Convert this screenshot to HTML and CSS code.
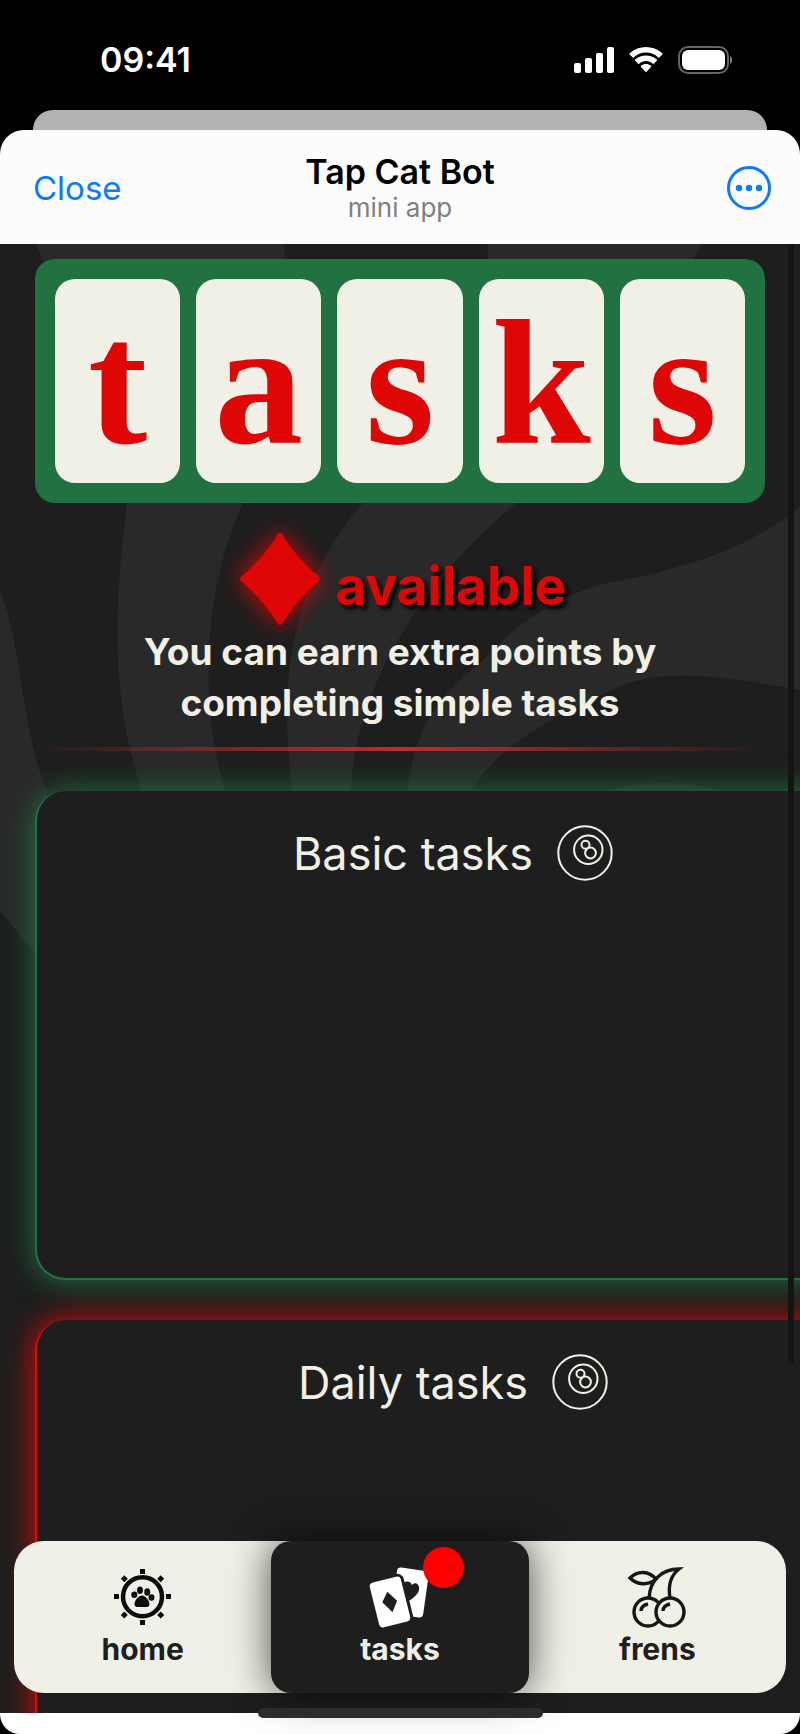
FILE: index.html
```html
<!DOCTYPE html>
<html lang="en">

<head>
    <meta charset="UTF-8">
    <meta name="viewport" content="width=device-width, initial-scale=1.0">
    <title>Tap Cat Bot</title>
    <link rel="stylesheet" href="styles.css">
</head>

<body>
    <div class="phone">
        <div class="status-bar">
            <span class="time">09:41</span>
            <div class="status-icons">
                <svg width="40" height="26" viewBox="0 0 40 26" fill="#fff">
                    <rect x="0" y="16" width="7" height="10" rx="2" />
                    <rect x="11" y="11" width="7" height="15" rx="2" />
                    <rect x="22" y="6" width="7" height="20" rx="2" />
                    <rect x="33" y="0" width="7" height="26" rx="2" />
                </svg>
                <svg width="34" height="26" viewBox="0 0 34 26" fill="#fff">
                    <path d="M17 5.500c4.600 0 9 1.700 12.300 4.900.3.300.7.300 1 0l3-3c.3-.3.3-.8 0-1.100C24-2 10-2 .7 6.300c-.3.300-.3.800 0 1.100l3 3c.3.300.7.300 1 0C8 7.200 12.400 5.500 17 5.500z" />
                    <path d="M17 14c2.500 0 5 1 6.800 2.700.3.300.8.300 1 0l3-3c.3-.300.3-.8 0-1.100-6-5.600-15.600-5.600-21.600 0-.3.300-.3.800 0 1.100l3 3c.3.300.700.300 1 0C12 15 14.500 14 17 14z" />
                    <path d="M22 19.900c.3-.3.3-.8 0-1.100-2.900-2.300-7.100-2.300-10 0-.3.300-.3.800 0 1.100l4.400 4.900c.3.400.9.400 1.200 0z" />
                </svg>
                <svg width="56" height="28" viewBox="0 0 56 28">
                    <rect x="1" y="1" width="49" height="26" rx="9" fill="none" stroke="#666" stroke-width="2" />
                    <rect x="4" y="4" width="43" height="20" rx="6" fill="#fff" />
                    <path d="M52 10c3 1 3 7 0 8z" fill="#777" />
                </svg>
            </div>
        </div>
        <div class="back-sheet"></div>

        <div class="sheet">
            <header class="header">
                <button class="close">Close</button>
                <div class="header-title">
                    <h1>Tap Cat Bot</h1>
                    <p>mini app</p>
                </div>
                <button class="more" aria-label="More">
                    <svg width="44" height="44" viewBox="0 0 44 44">
                        <circle cx="22" cy="22" r="20.500" fill="none" stroke="#0a7aff" stroke-width="3" />
                        <g fill="#0a7aff">
                            <circle cx="12" cy="22" r="3.200" />
                            <circle cx="22" cy="22" r="3.200" />
                            <circle cx="32" cy="22" r="3.200" />
                        </g>
                    </svg>
                </button>
            </header>

            <main class="content">
                <svg class="stripes" viewBox="0 0 800 760" preserveAspectRatio="xMidYMin slice" fill="#292929">
                    <path d="M36 0H284C290 60 270 200 243 259C205 340 197 460 226 548H142C113 460 112 380 127 259C110 150 60 60 36 0z" />
                    <path d="M488 0H702L690 20L517 259C440 320 355 430 351 548H292C280 440 285 350 363 259C440 160 488 80 488 0z" />
                    <path d="M407 548C415 470 455 440 483 416C510 388 545 356 600 341C680 325 740 310 800 263V446C740 435 660 420 612 446C550 475 500 500 470 548z" />
                    <path d="M602 548Q663 530 724 548z" />
                    <path d="M0 347C22 400 20 480 47 548V707H33L0 667z" />
                </svg>

                <div class="board">
                    <span>t</span>
                    <span>a</span>
                    <span>s</span>
                    <span>k</span>
                    <span>s</span>
                </div>

                <section class="intro">
                    <div class="available">
                        <svg class="diamond" width="80" height="94" viewBox="0 0 80 94">
                            <path d="M38 2Q40 0 42 2Q56 26 79 45Q81 47 79 49Q56 68 42 92Q40 94 38 92Q24 68 1 49Q-1 47 1 45Q24 26 38 2z" fill="#df0606" />
                        </svg>
                        <h2>available</h2>
                    </div>
                    <p>You can earn extra points by<br>completing simple tasks</p>
                    <hr>
                </section>

                <section class="panel basic">
                    <h3>Basic tasks</h3>
                    <svg class="ball" width="56" height="56" viewBox="0 0 56 56">
                        <circle cx="28" cy="28" r="26.700" />
                        <circle cx="31.300" cy="24.700" r="14.200" />
                        <circle cx="28.500" cy="19.700" r="4" />
                        <circle cx="33.500" cy="28" r="5.400" />
                    </svg>
                </section>

                <section class="panel daily">
                    <h3>Daily tasks</h3>
                    <svg class="ball" width="56" height="56" viewBox="0 0 56 56">
                        <circle cx="28" cy="28" r="26.700" />
                        <circle cx="31.300" cy="24.700" r="14.200" />
                        <circle cx="28.500" cy="19.700" r="4" />
                        <circle cx="33.500" cy="28" r="5.400" />
                    </svg>
                </section>

                <div class="scrollbar"></div>
            </main>

            <nav class="nav">
                <a href="#home">
                    <svg width="60" height="64" viewBox="0 0 60 64" fill="#0c0c0c">
                        <circle cx="29.500" cy="31.700" r="19.500" fill="none" stroke="#0c0c0c" stroke-width="4.500" />
                        <rect x="27" y="4" width="5" height="5" />
                        <rect x="27" y="55" width="5" height="5" />
                        <rect x="1" y="29" width="5" height="5" />
                        <rect x="53" y="29" width="5" height="5" />
                        <path d="M11.300 10.200l3.500 3.500-3.500 3.500-3.500-3.500zM47.700 10.200l3.500 3.500-3.500 3.500-3.500-3.500zM11.300 46.500l3.500 3.500-3.500 3.500-3.500-3.500zM47.700 46.500l3.500 3.500-3.500 3.500-3.500-3.500z" />
                        <ellipse cx="21.300" cy="29.700" rx="3" ry="3.300" />
                        <ellipse cx="27" cy="25.300" rx="3" ry="3.800" />
                        <ellipse cx="34.200" cy="27" rx="3" ry="3.800" />
                        <ellipse cx="38.500" cy="32.500" rx="3" ry="3.300" />
                        <path d="M29 30.500c4 0 7.500 6 7.500 8.500 0 4-4 3-7.500 3s-7.500 1-7.500-3c0-3 3.500-8.500 7.500-8.500z" />
                    </svg>
                    home
                </a>
                <a href="#tasks" class="active">
                    <svg width="60" height="64" viewBox="0 0 60 64">
                        <rect x="24" y="4" width="32" height="47" rx="4" transform="rotate(8 40 28)" fill="#fff" />
                        <path d="M34 18c3-3 7-1 8 2 4-4 8 0 7 5-1 4-5 8-12 12z" fill="#1e1e1e" />
                        <rect x="4" y="14" width="32" height="46" rx="4" transform="rotate(-14 20 37)" fill="#fff" stroke="#1e1e1e" stroke-width="6" paint-order="stroke" />
                        <path d="M17.300 26.700l9.800 9-4.600 11.600-10.200-10z" fill="#1e1e1e" />
                    </svg>
                    tasks
                    <span class="dot"></span>
                </a>
                <a href="#frens">
                    <svg width="60" height="64" viewBox="0 0 60 64" fill="none" stroke="#161616" stroke-width="3.400">
                        <circle cx="21" cy="47" r="14" />
                        <circle cx="43" cy="47" r="14" fill="#f0f0e6" />
                        <path d="M22 33C23 16 34 4 52 4C43 11 41 21 43 33M3 13C11 5 22 6 29 14C21 21 10 20 3 13zM14 46c0-4 3-6 7-7M36 46c0-4 3-6 7-7" />
                    </svg>
                    frens
                </a>
            </nav>
        </div>

        <div class="home-bar"><span></span></div>
    </div>
</body>

</html>
```

FILE: styles.css
```css
* {
    margin: 0;
    padding: 0;
    box-sizing: border-box;
}

body {
    background-color: #000;
    font-family: Inter, "Liberation Sans", sans-serif;
}

.phone {
    height: 100vh;
    display: flex;
    flex-direction: column;
    background-color: #000;
}

.status-bar {
    height: 110px;
    padding: 9px 66px 0 100px;
    display: flex;
    align-items: center;
    justify-content: space-between;
    flex-shrink: 0;
}

.time {
    color: #fff;
    font-size: 34px;
    font-weight: 600;
}

.status-icons {
    display: flex;
    align-items: center;
    gap: 15px;
}

.back-sheet {
    height: 20px;
    margin: 0 33px;
    background-color: #b3b2b0;
    border-radius: 20px 20px 0 0;
    flex-shrink: 0;
}

.sheet {
    flex: 1;
    min-height: 0;
    position: relative;
    display: flex;
    flex-direction: column;
}

.header {
    height: 114px;
    padding: 2px 29px 0;
    display: grid;
    grid-template-columns: 1fr auto 1fr;
    align-items: center;
    flex-shrink: 0;
    background-color: #fcfcfc;
    border-radius: 24px 24px 0 0;
}

.header button {
    border: none;
    background: none;
    color: #0a7aff;
}

.header .close {
    justify-self: start;
    padding-left: 4px;
    font-family: inherit;
    font-size: 33px;
}

.more {
    justify-self: end;
    height: 44px;
}

.header-title {
    text-align: center;
}

.header-title h1 {
    font-size: 34px;
    line-height: 40px;
    font-weight: 600;
}

.header-title p {
    color: #808080;
    font-size: 26px;
    line-height: 32px;
}

.content {
    flex: 1;
    min-height: 0;
    position: relative;
    overflow: hidden;
    padding: 15px 35px 0;
    background-color: #1e1e1e;
}

.stripes {
    position: absolute;
    top: 0;
    left: 0;
    width: 100%;
}

/* title made of playing cards */
.board {
    position: relative;
    height: 244px;
    padding: 20px;
    display: grid;
    grid-template-columns: repeat(5, 1fr);
    gap: 16px;
    background-color: #227141;
    border-radius: 20px;
}

.board span {
    padding-top: 4px;
    background-color: #f0f0e6;
    border-radius: 20px;
    color: #df0606;
    font-family: "Liberation Serif", serif;
    font-size: 178px;
    font-weight: bold;
    line-height: 200px;
    text-align: center;
}

.intro {
    position: relative;
    text-align: center;
    color: #f0f0e6;
}

.available {
    padding: 29px 0 0 6px;
    display: flex;
    justify-content: center;
    gap: 16px;
}

.diamond {
    overflow: visible;
    filter: drop-shadow(0 0 12px #df0606);
}

.available h2 {
    padding-top: 21px;
    color: #df0606;
    font-size: 53px;
    line-height: 66px;
    text-shadow: 4px 4px 4px #000;
}

.intro p {
    font-size: 37px;
    font-weight: 700;
    line-height: 51px;
}

.intro hr {
    height: 4px;
    margin-top: 19px;
    border: none;
    background: linear-gradient(to right, transparent, #c62a2c, transparent);
}

.panel {
    position: relative;
    width: 836px;
    height: 489px;
    display: flex;
    justify-content: center;
    gap: 24px;
    margin-top: 40px;
    padding-top: 34px;
    background-color: #1e1e1e;
    border-radius: 30px;
}

.panel h3 {
    color: #f0f0e6;
    font-size: 45px;
    font-weight: 400;
    line-height: 58px;
}

.basic {
    border: 2px solid #227141;
    border-top: none;
    box-shadow: 0 0 30px #227141;
}

.daily {
    border: 2px solid #df0606;
    border-top: none;
    box-shadow: 0 0 30px #df0606;
}

.ball {
    fill: none;
    stroke: #f0f0e6;
    stroke-width: 2px;
}

.scrollbar {
    position: absolute;
    top: 0;
    right: 6px;
    width: 6px;
    height: 1120px;
    background-color: #141414;
    border-radius: 3px;
}

.nav {
    position: absolute;
    left: 14px;
    right: 14px;
    bottom: 20px;
    height: 152px;
    display: grid;
    grid-template-columns: repeat(3, 1fr);
    background-color: #f0f0e6;
    border-radius: 30px;
}

.nav a {
    position: relative;
    padding-top: 24px;
    display: flex;
    flex-direction: column;
    align-items: center;
    color: #1e1e1e;
    font-size: 30px;
    font-weight: 700;
    line-height: 40px;
    text-decoration: none;
}

.nav svg {
    overflow: visible;
}

.nav .active {
    background-color: #1e1e1e;
    color: #f0f0e6;
    border-radius: 20px;
    box-shadow: 0 0 40px rgba(0, 0, 0, 0.7);
}

.dot {
    position: absolute;
    top: 6px;
    right: 65px;
    width: 41px;
    height: 41px;
    background-color: #f00;
    border-radius: 50%;
}

.home-bar {
    height: 21px;
    display: flex;
    justify-content: center;
    flex-shrink: 0;
    background-color: #fff;
    border-radius: 0 0 20px 20px;
}

.home-bar span {
    position: relative;
    top: -5px;
    width: 285px;
    height: 10px;
    background-color: #2c2c2c;
    border-radius: 5px;
}
```
